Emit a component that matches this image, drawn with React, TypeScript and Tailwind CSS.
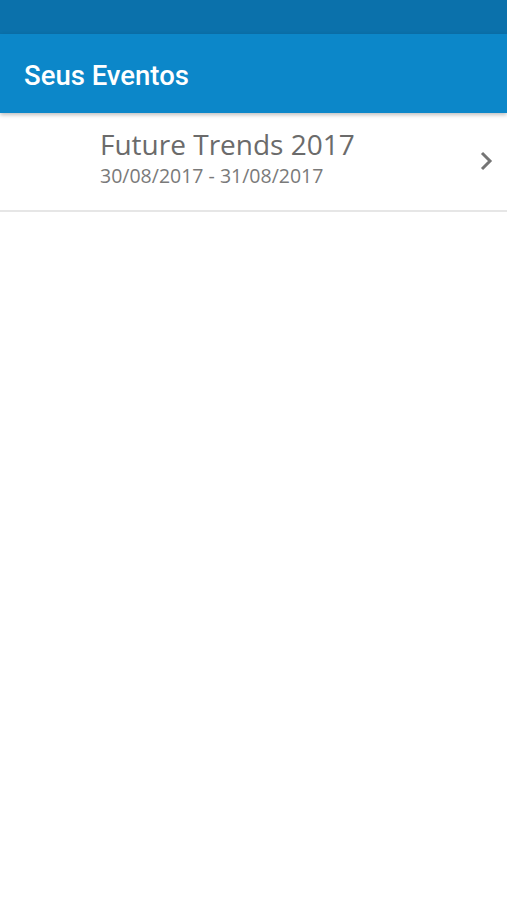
import React from "react";

export default function App() {
  return (
    <div className="w-[507px] h-[900px] bg-white flex flex-col" style={{ fontFamily: "Roboto, 'Open Sans', sans-serif" }}>
      <div className="h-[34px] bg-[#0b71ab] shrink-0" />
      <div className="h-[79px] bg-[#0c87c9] flex items-center px-[24px] shadow-[0_2px_4px_rgba(0,0,0,0.25)] relative z-10 shrink-0">
        <span className="text-white text-[27.5px] font-medium mt-[4px]" style={{ fontFamily: "Roboto, sans-serif" }}>Seus Eventos</span>
      </div>
      <div className="h-[99px] flex items-center border-b-[2px] border-[#e6e6e6] shrink-0">
        <div className="w-[100px] shrink-0" />
        <div className="flex-1 flex flex-col mt-[-4px]" style={{ fontFamily: "'Open Sans', sans-serif" }}>
          <span className="text-[28px] leading-[32px] text-[#6b6b6b]">Future Trends 2017</span>
          <span className="text-[19.5px] leading-[32px] text-[#7a7a7a]">30/08/2017 - 31/08/2017</span>
        </div>
        <svg width="16" height="22" viewBox="0 0 16 22" className="mr-[13px] mt-[-2px]">
          <path d="M4 3 L12 11 L4 19" fill="none" stroke="#757575" strokeWidth="3" />
        </svg>
      </div>
    </div>
  );
}
